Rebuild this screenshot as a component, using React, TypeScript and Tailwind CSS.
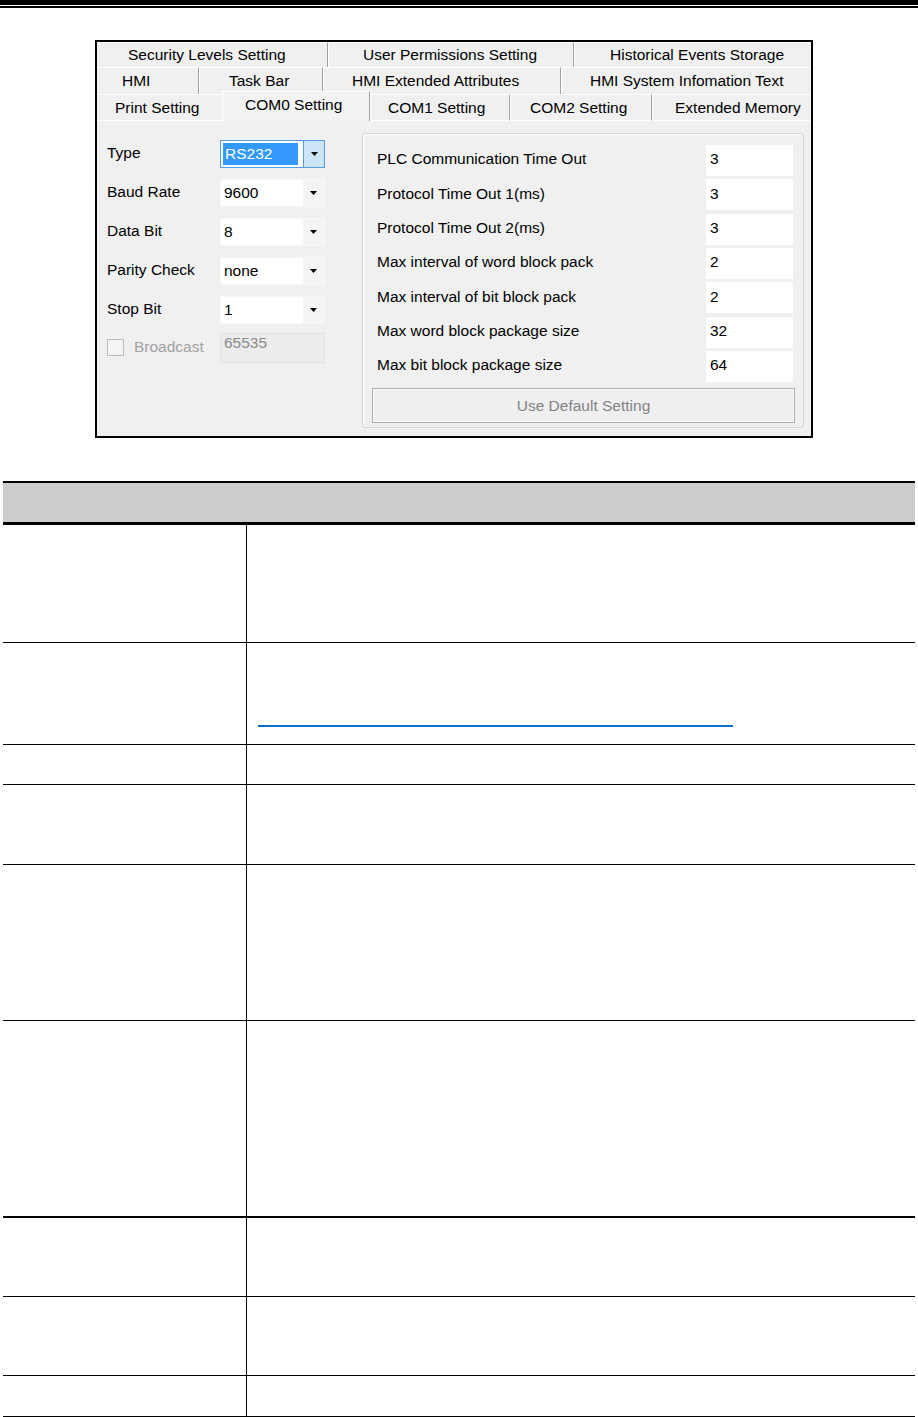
type Tab = { label: string; w: string; pl: string };

const row1: Tab[] = [
  { label: "Security Levels Setting", w: "w-[231px]", pl: "pl-[31px]" },
  { label: "User Permissions Setting", w: "w-[246px]", pl: "pl-[35px]" },
  { label: "Historical Events Storage", w: "w-[237px]", pl: "pl-[36px]" },
];

const row2: Tab[] = [
  { label: "HMI", w: "w-[102px]", pl: "pl-[25px]" },
  { label: "Task Bar", w: "w-[124px]", pl: "pl-[30px]" },
  { label: "HMI Extended Attributes", w: "w-[238px]", pl: "pl-[29px]" },
  { label: "HMI System Infomation Text", w: "w-[250px]", pl: "pl-[29px]" },
];

const fields = [
  { label: "Type", value: "RS232", active: true },
  { label: "Baud Rate", value: "9600" },
  { label: "Data Bit", value: "8" },
  { label: "Parity Check", value: "none" },
  { label: "Stop Bit", value: "1" },
];

const timeouts = [
  { label: "PLC Communication Time Out", value: "3" },
  { label: "Protocol Time Out 1(ms)", value: "3" },
  { label: "Protocol Time Out 2(ms)", value: "3" },
  { label: "Max interval of word block pack", value: "2" },
  { label: "Max interval of bit block pack", value: "2" },
  { label: "Max word block package size", value: "32" },
  { label: "Max bit block package size", value: "64" },
];

// table rows, height includes bottom rule
const tableRows = [
  "h-[118px] border-b border-black",
  "h-[102px] border-b border-black",
  "h-[40px] border-b border-black",
  "h-[80px] border-b border-black",
  "h-[156px] border-b border-black",
  "h-[197px] border-b-2 border-black",
  "h-[79px] border-b border-black",
  "h-[79px] border-b border-black",
  "h-[41px] border-b border-black",
];

function Arrow({ color = "#000" }: { color?: string }) {
  return (
    <svg width="7" height="4" viewBox="0 0 7 4">
      <polygon points="0,0 7,0 3.5,4" fill={color} />
    </svg>
  );
}

function TabCell({ tab, last }: { tab: Tab; last?: boolean }) {
  return (
    <div
      className={`flex h-full items-center border-t border-t-white ${tab.w} ${tab.pl} ${
        last ? "" : "border-r border-r-[#a0a0a0] shadow-[1px_0_0_#ffffff]"
      }`}
    >
      {tab.label}
    </div>
  );
}

function Combo({ value, active }: { value: string; active?: boolean }) {
  if (active) {
    return (
      <div className="flex h-[28px] w-[105px] border border-[#569de5] bg-white">
        <div className="flex flex-1 items-center py-[2px] pl-[2px] pr-[5px]">
          <div className="flex h-full w-full items-center bg-[#3399ff] pl-[2px] text-white">{value}</div>
        </div>
        <div className="flex w-[21px] items-center justify-center border-l border-[#569de5] bg-[#cce4f7]">
          <Arrow />
        </div>
      </div>
    );
  }
  return (
    <div className="flex h-[28px] w-[105px] border border-[#f7f7f7] bg-white">
      <div className="flex flex-1 items-center pl-[3px] pb-[1px]">{value}</div>
      <div className="flex w-[21px] items-center justify-center bg-[#f4f4f4]">
        <Arrow />
      </div>
    </div>
  );
}

function Dialog() {
  return (
    <div className="ml-[95px] mt-[32px] flex h-[398px] w-[718px] flex-col border-2 border-black bg-[#f0f0f0]">
      {/* tab rows */}
      <div className="flex h-[25px]">
        {row1.map((t, i) => (
          <TabCell key={t.label} tab={t} last={i === row1.length - 1} />
        ))}
      </div>
      <div className="flex h-[27px]">
        {row2.map((t, i) => (
          <TabCell key={t.label} tab={t} last={i === row2.length - 1} />
        ))}
      </div>
      <div className="flex h-[27px] items-end">
        <div className="flex h-full w-[125px] items-center border-y border-t-white border-b-white pl-[18px]">Print Setting</div>
        <div className="flex h-[30px] w-[148px] items-center border-l border-t border-l-white border-t-white border-r border-r-[#a0a0a0] bg-[#f3f3f3] pb-[4px] pl-[22px] shadow-[1px_0_0_#ffffff]">
          COM0 Setting
        </div>
        <div className="flex h-full w-[140px] items-center border-y border-t-white border-b-white border-r border-r-[#a0a0a0] pl-[18px] shadow-[1px_0_0_#ffffff]">COM1 Setting</div>
        <div className="flex h-full w-[142px] items-center border-y border-t-white border-b-white border-r border-r-[#a0a0a0] pl-[20px] shadow-[1px_0_0_#ffffff]">COM2 Setting</div>
        <div className="flex h-full flex-1 items-center border-y border-t-white border-b-white pl-[23px]">Extended Memory</div>
      </div>

      {/* page content */}
      <div className="flex flex-1 pl-[10px] pr-[7px] pt-[12px]">
        <div className="flex w-[218px] flex-col pt-[7px]">
          {fields.map((f, i) => (
            <div key={f.label} className={`flex h-[28px] items-center ${i > 0 ? "mt-[11px]" : ""}`}>
              <div className="w-[113px] pb-[2px]">{f.label}</div>
              <Combo value={f.value} active={f.active} />
            </div>
          ))}
          <div className="mt-[9px] flex h-[30px] items-center">
            <div className="flex w-[113px] items-center pb-[2px]">
              <div className="h-[17px] w-[17px] border border-[#bcbcbc] bg-[#f4f4f4]" />
              <span className="ml-[10px] text-[#a2a2a2]">Broadcast</span>
            </div>
            <div className="h-[30px] w-[105px] border border-[#e3e3e3] bg-[#ececec] pl-[3px] pt-[1px] text-[#8a8a8a]">65535</div>
          </div>
        </div>

        <div className="ml-[37px] flex h-[295px] flex-1 flex-col rounded-[3px] border border-[#d5d5d5] pl-[14px] pr-[10px] pt-[11px] shadow-[inset_1px_1px_0_#ffffff]">
          <div className="flex flex-col gap-[3.35px]">
            {timeouts.map((t) => (
              <div key={t.label} className="flex h-[31px] items-center justify-between">
                <div className="pb-[3px]">{t.label}</div>
                <div className="flex h-full w-[87px] items-center bg-white pb-[3px] pl-[4px]">{t.value}</div>
              </div>
            ))}
          </div>
          <div className="ml-[-5px] mr-[-2px] mt-[6px] flex h-[35px] items-center justify-center border border-[#adadad] bg-[#efefef] text-[#838383] shadow-[inset_0_0_0_1px_#fbfbfb]">
            Use Default Setting
          </div>
        </div>
      </div>
    </div>
  );
}

export default function App() {
  return (
    <div className="h-[1417px] w-[918px] overflow-hidden bg-white font-['Liberation_Sans',Arial,sans-serif] text-[15.5px] leading-none text-black">
      <div className="h-[5px] bg-black" />
      <div className="mt-[1px] h-[2px] bg-black" />

      <Dialog />

      <div className="ml-[3px] mt-[43px] w-[912px]">
        <div className="h-[44px] border-t-2 border-b-[3px] border-black bg-[#cccccc]" />
        {tableRows.map((cls, i) => (
          <div key={i} className={`flex ${cls}`}>
            <div className="w-[244px] border-r border-black" />
            <div className="flex flex-1 flex-col">
              {i === 1 && <div className="ml-[11px] mt-[82px] h-[2px] w-[475px] bg-[#0b6fd0]" />}
            </div>
          </div>
        ))}
      </div>
    </div>
  );
}
